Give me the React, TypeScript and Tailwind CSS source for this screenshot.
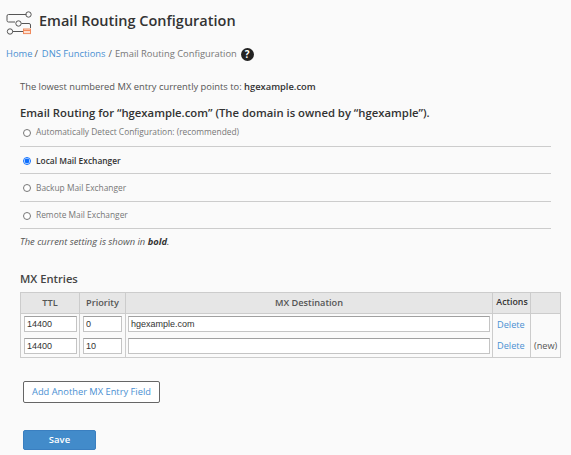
import React from 'react';

type RoutingOption = { label: string; selected?: boolean; rowClass: string };

const options: RoutingOption[] = [
  { label: 'Automatically Detect Configuration: (recommended)', rowClass: 'h-[27px] pb-[1px]' },
  { label: 'Local Mail Exchanger', selected: true, rowClass: 'h-[27px] pt-[2px]' },
  { label: 'Backup Mail Exchanger', rowClass: 'h-[28px] pt-[1px]' },
  { label: 'Remote Mail Exchanger', rowClass: 'h-[27px] pt-[1px]' },
];

const rows = [
  { ttl: '14400', priority: '0', destination: 'hgexample.com', isNew: false },
  { ttl: '14400', priority: '10', destination: '', isNew: true },
];

function RoutingIcon() {
  return (
    <svg width="28" height="28" viewBox="0 0 28 28" fill="none" className="shrink-0">
      <g stroke="#555" strokeWidth="1">
        <path d="M20.5 7.5H2.5a1.5 1.5 0 0 0-1.5 1.5v4.5a1.5 1.5 0 0 0 1.5 1.5h6.5" />
        <path d="M15.5 16.5h7.5a1.5 1.5 0 0 1 1.5 1.5v3" />
        <path d="M6.5 24.5h10.5" />
        <circle cx="22.5" cy="7.5" r="2.7" />
        <circle cx="12.5" cy="16.5" r="2.7" />
        <circle cx="4" cy="24.5" r="2.7" />
      </g>
      <rect x="17.5" y="22" width="7" height="4.6" fill="#fde0d2" stroke="#f08a5d" />
      <path d="M18 23.5h6" stroke="#f08a5d" />
    </svg>
  );
}

function App() {
  return (
    <div className="w-[571px] h-[455px] overflow-hidden bg-[#fafafa] text-[#555] text-[9.35px] font-['Open_Sans',sans-serif]">
      <div className="flex items-center pl-[6px] pt-[7px] gap-[5px]">
        <RoutingIcon />
        <h1 className="text-[14.5px] leading-[28px] font-semibold text-[#333]">Email Routing Configuration</h1>
      </div>

      <div className="flex items-center pl-[6px] mt-[12px] h-[14px]">
        <a className="text-[#4a90d2]">Home</a>
        <span className="ml-[2px] mr-[4px]">/</span>
        <a className="text-[#4a90d2]">DNS Functions</a>
        <span className="ml-[3px] mr-[3px]">/</span>
        <span className="text-[#777]">Email Routing Configuration</span>
        <span className="ml-[4px] flex h-[13px] w-[13px] items-center justify-center rounded-full bg-[#222] text-[10px] font-bold leading-none text-white">?</span>
      </div>

      <div className="px-[20px]">
        <p className="mt-[19px] leading-[14px]">
          The lowest numbered MX entry currently points to: <b className="font-semibold text-[#333]">hgexample.com</b>
        </p>

        <h2 className="mt-[11px] text-[11.3px] leading-[16px] font-semibold text-[#333]">
          Email Routing for “hgexample.com” (The domain is owned by “hgexample”).
        </h2>

        <div className="-mt-[1px]">
          {options.map((option) => (
            <label key={option.label} className={`flex items-center gap-[5px] border-b border-[#ccc] pl-[3px] ${option.rowClass}`}>
              <input type="radio" name="routing" defaultChecked={option.selected} className="m-0 h-[8px] w-[8px] accent-[#0d6efd]" />
              <span className={option.selected ? 'text-[8.4px] font-semibold text-[#333]' : 'text-[8.4px] text-[#777]'}>{option.label}</span>
            </label>
          ))}
        </div>

        <p className="mt-[6px] leading-[14px] italic">
          The current setting is shown in <b className="font-bold text-[#333]">bold</b>.
        </p>

        <h2 className="mt-[22px] text-[11.2px] leading-[16px] font-semibold text-[#444]">MX Entries</h2>

        <table className="mt-[5px] w-[541px] table-fixed border-collapse border border-[#ccc] text-[9.2px]">
          <thead>
            <tr className="h-[21px] bg-[#e6e6e6]">
              <th className="w-[59px] border border-[#ccc] font-semibold">TTL</th>
              <th className="w-[46px] border border-[#ccc] font-semibold">Priority</th>
              <th className="border border-[#ccc] font-semibold">MX Destination</th>
              <th className="w-[38px] border border-[#ccc] pl-[1px] text-[8.8px] font-semibold text-[#333]">Actions</th>
              <th className="w-[30px] border border-[#ccc]"></th>
            </tr>
          </thead>
          <tbody>
            {rows.map((row) => (
              <tr key={row.ttl + row.priority} className="h-[22px]">
                <td className="border-x border-[#ccc] px-[3px] pt-[2px] align-top">
                  <input readOnly value={row.ttl} className="block h-[16px] w-[53px] border border-[#c4c4c4] border-t-[#a0a0a0] bg-white px-[2px] font-['Liberation_Sans',sans-serif] text-[9px] text-[#333] outline-none" />
                </td>
                <td className="border-x border-[#ccc] px-[3px] pt-[2px] align-top">
                  <input readOnly value={row.priority} className="block h-[16px] w-[39px] border border-[#c4c4c4] border-t-[#a0a0a0] bg-white px-[2px] font-['Liberation_Sans',sans-serif] text-[9px] text-[#333] outline-none" />
                </td>
                <td className="border-x border-[#ccc] px-[2px] pt-[2px] align-top">
                  <input readOnly value={row.destination} className="block h-[16px] w-full border border-[#c4c4c4] border-t-[#a0a0a0] bg-white px-[2px] font-['Liberation_Sans',sans-serif] text-[9px] text-[#333] outline-none" />
                </td>
                <td className="border-x border-[#ccc] px-[4px] text-[#4a90d2]">Delete</td>
                <td className="border-x border-[#ccc] px-[3px] whitespace-nowrap">{row.isNew ? '(new)' : ''}</td>
              </tr>
            ))}
          </tbody>
        </table>

        <button className="mt-[23px] ml-[3px] block h-[22px] w-[137px] rounded-[2px] border border-[#666] bg-white text-center text-[9.3px] text-[#4a90d2]">
          Add Another MX Entry Field
        </button>

        <button className="mt-[27px] ml-[3px] block h-[20px] w-[73px] rounded-[2px] border border-[#3a7fc0] bg-[#428bca] text-center text-[9.5px] font-semibold text-white">
          Save
        </button>
      </div>
    </div>
  );
}

export default App;
